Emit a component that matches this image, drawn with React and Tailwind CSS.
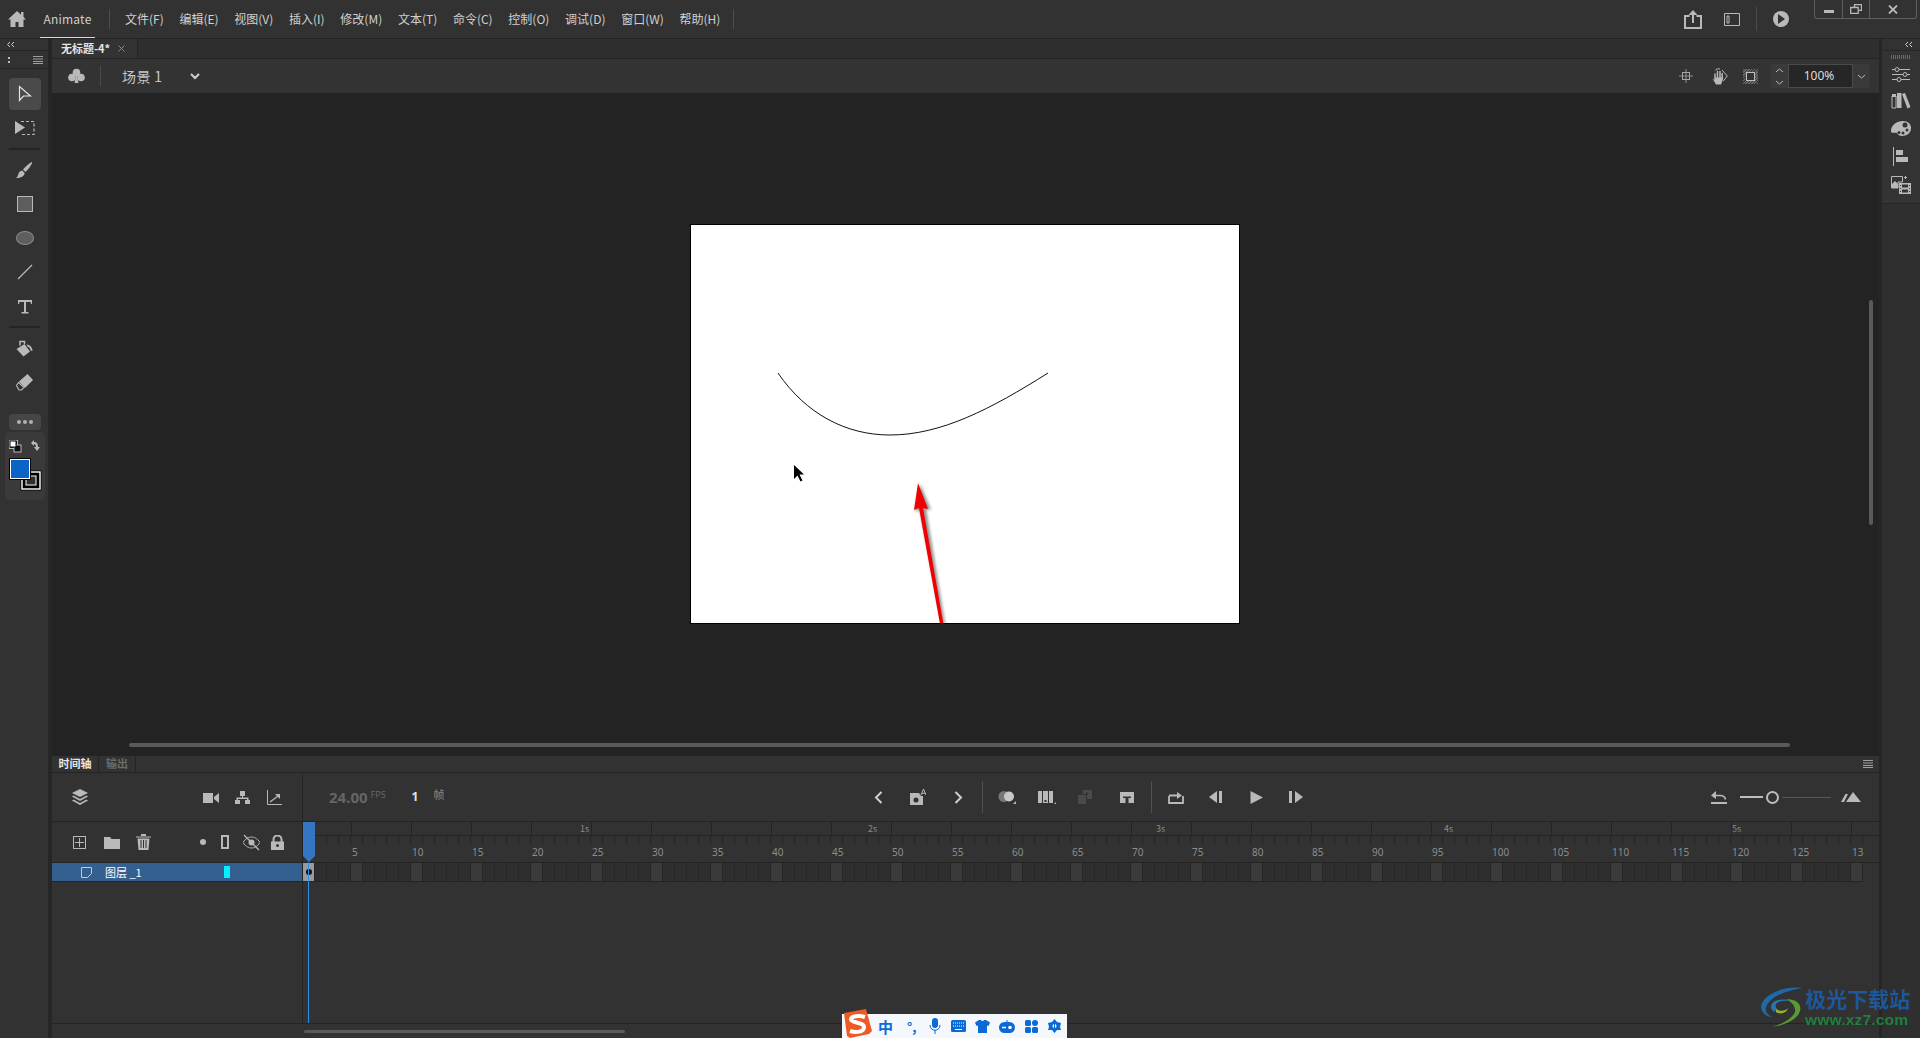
import React from "react";

const menus = ["文件(F)", "编辑(E)", "视图(V)", "插入(I)", "修改(M)", "文本(T)", "命令(C)", "控制(O)", "调试(D)", "窗口(W)", "帮助(H)"];
const frames = Array.from({ length: 130 }, (_, i) => i + 1);
const topCells = Array.from({ length: 26 }, (_, i) => i);
const secLabels = {
  4: ["1s", "pl-[48px]"],
  9: ["2s", "pl-[36px]"],
  14: ["3s", "pl-[24px]"],
  19: ["4s", "pl-[12px]"],
  24: ["5s", "pl-0"],
};

const Svg = ({ w = 20, h = 20, children, className = "" }) => (
  <svg width={w} height={h} viewBox={`0 0 ${w} ${h}`} className={`shrink-0 ${className}`}>
    {children}
  </svg>
);

const G = "#b9b9b9";

const Tool = ({ active, children }) => (
  <div className={`w-8 h-8 flex items-center justify-center rounded ${active ? "bg-[#4a4a4a]" : ""}`}>{children}</div>
);

const Btn = ({ children }) => <div className="w-10 h-8 flex items-center justify-center shrink-0">{children}</div>;

const LeftToolbar = () => (
  <div className="w-[49px] shrink-0 bg-[#323232] flex flex-col border-r border-[#262626]">
    <div className="h-3 flex items-center pl-[6px] border-b border-[#262626]">
      <Svg w={9} h={7}><path d="M4 1 1.500 3.500 4 6M8 1 5.500 3.500 8 6" stroke="#d0d0d0" fill="none" /></Svg>
    </div>
    <div className="h-[18px] flex items-center justify-between pl-2 pr-[5px] border-b border-[#262626]">
      <Svg w={2} h={8}><path d="M0 1h2v2H0zM0 5h2v2H0z" fill="#bbb" /></Svg>
      <Svg w={10} h={8}><path d="M0 .5h10M0 3h10M0 5.500h10M0 7.500h10" stroke="#a0a0a0" /></Svg>
    </div>
    <div className="flex flex-col items-center mt-[9px] gap-[2px] pl-[1px]">
      <Tool active>
        <Svg w={14} h={18}><path d="M1.500 1.500v14l4-4.500h7z" fill="none" stroke="#e4e4e4" strokeWidth="1.200" /></Svg>
      </Tool>
      <Tool>
        <Svg w={20} h={16}>
          <path d="M0 1l10 6.500-10 6.500z" fill={G} />
          <path d="M6 1.500h13v13H6" fill="none" stroke={G} strokeWidth="1.200" strokeDasharray="3 2" />
        </Svg>
      </Tool>
      <div className="w-[31px] h-[2px] bg-[#242424] my-[2px]" />
      <Tool>
        <Svg w={17} h={17}>
          <path d="M16 0c.6 1.500-2.500 6-6.500 10L7 7.500C10 4 14 .5 16 0z" fill={G} />
          <path d="M6.300 8.500 8.700 11C8.500 14 5 16 0 16c2-1 1.800-3.500 3-5.500.6-1 2-1.800 3.300-2z" fill={G} />
        </Svg>
      </Tool>
      <Tool>
        <div className="w-4 h-4 bg-[#5e5e5e] border border-[#b9b9b9]" />
      </Tool>
      <Tool>
        <div className="w-[18px] h-[14px] rounded-[50%] bg-[#5e5e5e] border border-[#8c8c8c]" />
      </Tool>
      <Tool>
        <Svg w={16} h={16}><path d="M1 15 15 1" stroke={G} strokeWidth="1.200" /></Svg>
      </Tool>
      <Tool>
        <Svg w={16} h={15}><path d="M1 1h14v4h-1l-.5-2H9v10h2.500v1.500h-7V13H7V3H2.500L2 5H1z" fill={G} /></Svg>
      </Tool>
      <div className="w-[31px] h-[2px] bg-[#242424] my-[2px]" />
      <Tool>
        <Svg w={17} h={17}>
          <path d="M.5 9 8.500 4l5.500 7.500-6.500 5z" fill={G} />
          <path d="M4 5.500V1.500h4.500V4" fill="none" stroke={G} strokeWidth="1.500" />
          <path d="M10.500 4.500c3.500.2 6 3 6 6.500l-2-.5c0-2-1.500-3.500-3-4z" fill={G} />
        </Svg>
      </Tool>
      <Tool>
        <Svg w={18} h={17}>
          <path d="M3 7.500 11.500 0 17 6 9 14z" fill={G} />
          <path d="M2.500 8.500 8 13.500 5.500 16H3L.5 11.500z" fill="none" stroke={G} strokeWidth="1.100" />
        </Svg>
      </Tool>
      <div className="mt-[14px] w-8 h-4 rounded bg-[#464646] flex items-center justify-center gap-[2px]">
        <div className="w-[4px] h-[4px] rounded-full bg-[#b0b0b0]" />
        <div className="w-[4px] h-[4px] rounded-full bg-[#b0b0b0]" />
        <div className="w-[4px] h-[4px] rounded-full bg-[#b0b0b0]" />
      </div>
      <div className="w-10 h-[68px] rounded bg-[#3a3a3a]">
        <Svg w={40} h={68}>
          <rect x="4.500" y="8.500" width="8" height="8" fill="#111" stroke="#bbb" />
          <rect x="9" y="13" width="7" height="7" fill="#111" stroke="#bbb" />
          <rect x="5" y="9" width="6" height="6" fill="#fff" stroke="#111" />
          <path d="M26 11l3-3v2c3 0 4 2 4 5h2l-3 4-3-4h2c0-2-1-3-2-3v2z" fill={G} />
          <rect x="15.500" y="38.500" width="21" height="20" fill="#000" />
          <rect x="17" y="40" width="18" height="17" fill="none" stroke="#fff" strokeWidth="1.400" />
          <rect x="21" y="44" width="10" height="9" fill="#2e2e2e" stroke="#fff" strokeWidth="1" />
          <rect x="4.500" y="26.500" width="21" height="21" fill="#0a64c8" stroke="#000" />
          <rect x="5.500" y="27.500" width="19" height="19" fill="none" stroke="#fff" />
        </Svg>
      </div>
    </div>
  </div>
);

const RightPanel = () => (
  <div className="w-[38px] shrink-0 bg-[#2f2f2f] flex flex-col">
    <div className="h-3 flex items-center justify-end pr-[7px] border-b border-[#262626] bg-[#323232]">
      <Svg w={9} h={7}><path d="M4 1 1.500 3.500 4 6M8 1 5.500 3.500 8 6" stroke="#d0d0d0" fill="none" /></Svg>
    </div>
    <div className="h-[153px] bg-[#343434] border-b border-[#262626] flex flex-col items-center">
      <div className="h-[4px] w-5 mt-[4px] bg-[repeating-linear-gradient(90deg,#6a6a6a_0,#6a6a6a_1px,transparent_1px,transparent_2px)]" />
      <div className="h-[26px] mt-[2px] flex items-center">
        <Svg w={18} h={15}>
          <path d="M0 2.500h18M0 7.500h18M0 12.500h18" stroke={G} />
          <circle cx="5" cy="2.500" r="2" fill="#343434" stroke={G} />
          <circle cx="13" cy="7.500" r="2" fill="#343434" stroke={G} />
          <circle cx="7" cy="12.500" r="2" fill="#343434" stroke={G} />
        </Svg>
      </div>
      <div className="h-[28px] flex items-center">
        <Svg w={20} h={16}>
          <path d="M1 3h4v12H1z" fill="none" stroke={G} />
          <path d="M1 1h4v3H1zM6 0h4.500v15H6zM11 1l3-1 5.500 14-3 1.500z" fill={G} />
        </Svg>
      </div>
      <div className="h-[27px] flex items-center">
        <Svg w={20} h={15}>
          <path d="M0 10C0 4 6 0 12 0c5 0 8 3 8 7s-3 8-9 8C8 15 7 13 6 12 4 11 0 13 0 10z" fill={G} />
          <circle cx="8" cy="11.500" r="1.500" fill="#343434" /><circle cx="12" cy="12" r="1.500" fill="#343434" />
          <circle cx="16" cy="9" r="1.500" fill="#343434" /><circle cx="14" cy="4" r="2.500" fill="#343434" />
        </Svg>
      </div>
      <div className="h-[28px] flex items-center">
        <Svg w={16} h={19}>
          <path d="M.5 0v19" stroke={G} />
          <path d="M3 3h7v5H3zM3 10h12v5H3z" fill={G} />
        </Svg>
      </div>
      <div className="h-[29px] flex items-center">
        <Svg w={20} h={18}>
          <path d="M.5.500h11V6H7v6H.500z" fill="none" stroke={G} />
          <path d="M1 12V8l3-3 3 3v4z" fill={G} />
          <path d="M8 7h12v11H8z" fill={G} />
          <path d="M11 8.500h6v3h-6zM11 13.500h6v3h-6zM9 9h1v1H9zM9 12h1v1H9zM9 15h1v1H9zM18 9h1v1h-1zM18 12h1v1h-1zM18 15h1v1h-1z" fill="#343434" />
          <path d="M13 1.500h3M14.500 0v3" stroke={G} />
        </Svg>
      </div>
    </div>
  </div>
);

const TitleBar = () => (
  <div className="h-[39px] shrink-0 bg-[#323232] border-b border-[#242424] flex items-center text-[12px] text-[#d0d0d0]">
    <div className="w-[40px] shrink-0 pl-2">
      <Svg w={18} h={16}><path d="M9 0 0 8.500h2.500V16h5v-5h3v5h5V8.500H18L15.500 6V1h-2.500v2.700z" fill={G} /></Svg>
    </div>
    <div className="w-[55px] h-[37px] shrink-0 flex items-center justify-center border-b border-[#d8d8d8] mt-[1px] text-[#cfcfcf] tracking-[0.2px]">Animate</div>
    <div className="w-px h-5 ml-[14px] bg-[#4e4e4e]" />
    <div className="flex items-center gap-[15.700px] ml-[15px]">
      {menus.map((m) => (
        <span key={m} className="whitespace-nowrap">{m}</span>
      ))}
    </div>
    <div className="w-px h-5 ml-[13px] bg-[#4e4e4e]" />
    <div className="ml-auto flex items-center h-full">
      <Svg w={18} h={19}>
        <path d="M5.500 6H1v12h16V6h-4.500" fill="none" stroke={G} strokeWidth="2" />
        <path d="M9 0 4.500 5H8v8h2V5h3.500z" fill={G} />
      </Svg>
      <div className="ml-[22px]">
        <Svg w={16} h={13}>
          <path d="M.5.500h15v12H.5z" fill="none" stroke={G} />
          <path d="M3 3h2v7H3z" fill="none" stroke={G} />
        </Svg>
      </div>
      <div className="w-px h-6 ml-4 bg-[#4a4a4a]" />
      <div className="ml-4 w-4 h-4 rounded-full bg-[#b9b9b9] flex items-center justify-center">
        <Svg w={8} h={10}><path d="M1 0l7 5-7 5z" fill="#323232" /></Svg>
      </div>
      <div className="ml-[25px] self-start w-[103px] h-[19px] flex border border-t-0 border-[#5e5e5e] rounded-b-[3px]">
        <div className="w-[28px] flex items-center justify-center border-r border-[#5e5e5e]">
          <div className="w-[10px] h-[3px] mt-[5px] bg-[#b9b9b9]" />
        </div>
        <div className="w-[27px] flex items-center justify-center border-r border-[#5e5e5e]">
          <Svg w={12} h={10}>
            <path d="M4.500 3V.7h7v5.600H8.500" fill="none" stroke={G} strokeWidth="1.300" />
            <path d="M.7 3.500h7.500v5.800H.7z" fill="none" stroke={G} strokeWidth="1.300" />
          </Svg>
        </div>
        <div className="flex-1 flex items-center justify-center">
          <Svg w={10} h={9}><path d="M1 .5l8 8M9 .5l-8 8" stroke={G} strokeWidth="1.800" /></Svg>
        </div>
      </div>
      <div className="w-[3px]" />
    </div>
  </div>
);

const StageToolbar = () => (
  <div className="h-[34px] shrink-0 bg-[#333333] flex items-center text-[#c8c8c8]">
    <div className="w-12 flex justify-center">
      <Svg w={17} h={17}>
        <circle cx="8.500" cy="4.500" r="3.800" fill={G} /><circle cx="4" cy="9.500" r="3.800" fill={G} /><circle cx="13" cy="9.500" r="3.800" fill={G} />
        <path d="M8 8h1l1.500 7h-4z" fill={G} />
      </Svg>
    </div>
    <div className="w-px h-5 bg-[#4a4a4a]" />
    <span className="ml-[21px] text-[14px] whitespace-nowrap tracking-[0.4px]">场景 1</span>
    <div className="ml-[27px]">
      <Svg w={10} h={7}><path d="M1 1l4 4 4-4" fill="none" stroke="#d0d0d0" strokeWidth="2" /></Svg>
    </div>
    <div className="ml-auto flex items-center h-full pr-[9px]">
      <Svg w={14} h={14}>
        <path d="M7 0v14M0 7h14" stroke="#8e8e8e" />
        <rect x="3.500" y="3.500" width="7" height="7" fill="none" stroke="#a6a6a6" />
      </Svg>
      <div className="ml-[18px]">
        <Svg w={17} h={17}>
          <path d="M4 11V6M6.500 10V3.500M9 10V3.500M11.200 10.500V5.500" stroke={G} strokeWidth="1.500" strokeLinecap="round" />
          <path d="M1.500 10.500 4 12V9.500h7.800V12L10 16.500H5z" fill={G} />
          <path d="M4 2.500C5 1 7 .5 9 1" fill="none" stroke={G} />
          <path d="M11 2l5.300 6-4 5" fill="none" stroke={G} />
        </Svg>
      </div>
      <div className="ml-[15px] w-[15px] h-[15px] bg-[repeating-linear-gradient(135deg,#6b6b6b_0,#6b6b6b_1px,#3a3a3a_1px,#3a3a3a_2px)] flex items-center justify-center">
        <div className="w-[9px] h-[9px] bg-[#333333] border border-[#c0c0c0]" />
      </div>
      <div className="ml-[13px] h-6 flex items-center bg-[#3a3a3a] rounded-[2px]">
        <div className="w-[17px] flex flex-col items-center gap-[7px]">
          <Svg w={9} h={5}><path d="M1 4l3.500-3L8 4" fill="none" stroke={G} /></Svg>
          <Svg w={9} h={5}><path d="M1 1l3.500 3L8 1" fill="none" stroke={G} /></Svg>
        </div>
        <div className="w-[65px] h-6 bg-[#262626] border border-[#4a4a4a] flex items-center justify-center pr-[3px] text-[12px] text-[#dcdcdc] font-['Noto_Sans',sans-serif]">100%</div>
        <div className="w-[17px] flex justify-center">
          <Svg w={9} h={5}><path d="M1 1l3.500 3L8 1" fill="none" stroke={G} /></Svg>
        </div>
      </div>
    </div>
  </div>
);

const Stage = () => (
  <div className="relative flex-1 bg-[#232323] flex items-center justify-center overflow-hidden pr-[1px] pb-[1px]">
    <div className="w-[550px] h-[400px] bg-white border border-black">
      <svg width="548" height="398" viewBox="1 1 548 398" className="block">
        <defs>
          <filter id="sh" x="-50%" y="-10%" width="200%" height="120%"><feGaussianBlur stdDeviation="1.500" /></filter>
        </defs>
        <path d="M88 149C116 190 156 211 200 211 251 211 301 185 358 149" fill="none" stroke="#111" strokeWidth="1" />
        <path d="M104 241v14l3.500-3.500 3 6 2-1-3-6h4.500z" fill="#000" />
        <g filter="url(#sh)" opacity=".6" transform="translate(3 1)">
          <path d="M227 259l-5 27 5-1 22 114h3L233 284l5 1z" fill="#444" />
        </g>
        <path d="M228 259l-4 27 5-2 21 116h3.500L233 284l5 1z" fill="#f00000" />
      </svg>
    </div>
    <div className="absolute left-[77px] right-[89px] top-[650px] h-[4px] bg-[#5a5a5a] rounded-full" />
    <div className="absolute right-[6px] top-[207px] w-[4px] h-[225px] bg-[#5a5a5a] rounded-full" />
  </div>
);

const Timeline = () => (
  <div className="relative h-[282px] shrink-0 bg-[#323232] flex flex-col">
    {/* tabs */}
    <div className="h-[17px] shrink-0 flex items-stretch border-b border-[#242424] text-[11px] leading-none">
      <div className="w-[47px] flex items-center justify-center pb-[1px] font-bold text-[#e6e6e6] border-r border-[#242424]">时间轴</div>
      <div className="w-[37px] flex items-center justify-center pb-[1px] font-bold text-[#6c6c6c] border-r border-[#242424]">输出</div>
      <div className="ml-auto pr-[6px] flex items-center">
        <Svg w={10} h={8}><path d="M0 .5h10M0 3h10M0 5.500h10M0 7.500h10" stroke="#a0a0a0" /></Svg>
      </div>
    </div>
    {/* controls */}
    <div className="h-[49px] shrink-0 flex border-b border-[#242424]">
      <div className="w-[251px] shrink-0 flex items-center border-r border-[#242424] pl-[20px]">
        <Svg w={16} h={16}>
          <path d="M8 0l8 4-8 4-8-4zM1.500 6.500 8 10l6.500-3.500L16 7.500 8 12 0 7.500zM1.500 10.500 8 14l6.500-3.500 1.500 1L8 16l-8-4.500z" fill={G} />
        </Svg>
        <div className="ml-[115px]">
          <Svg w={16} h={11}><path d="M0 1h10v10H0zM11 5l5-4v10l-5-4z" fill={G} /></Svg>
        </div>
        <div className="ml-4">
          <Svg w={15} h={13}><path d="M5 0h5v5H8v1.500h5.500V9H15v4h-5V9h2V8H3v1h2v4H0V9h1.500V6.500H7V5H5z" fill={G} /></Svg>
        </div>
        <div className="ml-[17px]">
          <Svg w={15} h={15}>
            <path d="M.5 0v14.500H15" fill="none" stroke={G} />
            <path d="M3 12l8-6" stroke={G} strokeWidth="1.300" /><path d="M8 4h5v5z" fill={G} />
          </Svg>
        </div>
      </div>
      <div className="flex-1 flex items-center">
        <div className="w-[555px] shrink-0 flex items-center pl-[26px] text-[#666666] font-['Noto_Sans','Noto_Sans_CJK_SC',sans-serif]">
          <span className="text-[15px] font-bold leading-none">24.00</span>
          <span className="text-[9px] ml-[3px] mb-[6px] leading-none">FPS</span>
          <span className="text-[12px] ml-[26px] font-bold text-[#e2e2e2] leading-none">1</span>
          <span className="text-[11px] ml-[15px] mb-[6px] leading-none text-[#8a8a8a]">帧</span>
        </div>
        <Btn><Svg w={9} h={13}><path d="M7.500 1 2 6.500 7.500 12" fill="none" stroke="#cfcfcf" strokeWidth="2" /></Svg></Btn>
        <Btn>
          <Svg w={16} h={17}>
            <path d="M0 4h9l2 3h2v9H0z" fill={G} /><circle cx="6" cy="11" r="2.500" fill="#323232" />
            <path d="M11 6l2.500-6L16 6M12 4.300h3" fill="none" stroke={G} strokeWidth="1" />
          </Svg>
        </Btn>
        <Btn><Svg w={9} h={13}><path d="M1.500 1 7 6.500 1.500 12" fill="none" stroke="#cfcfcf" strokeWidth="2" /></Svg></Btn>
        <div className="w-px h-8 ml-[4px] mr-[4px] bg-[#505050] shrink-0" />
        <Btn>
          <Svg w={18} h={14}>
            <circle cx="6" cy="6.500" r="5.500" fill="#777" /><circle cx="11" cy="6.500" r="5" fill="#c8c8c8" />
            <path d="M18 14h-3l3-3z" fill={G} />
          </Svg>
        </Btn>
        <Btn>
          <Svg w={18} h={14}>
            <path d="M0 1h4v12H0zM5 1h5v12H5zM11 1h4v12h-4z" fill={G} /><path d="M6.500 10h2v2h-2z" fill="#323232" />
            <path d="M18 14h-2l2-2z" fill={G} />
          </Svg>
        </Btn>
        <Btn>
          <Svg w={18} h={14}>
            <path d="M5 0h9v9H9V4H5zM0 5h8v9H0z" fill="#4a4a4a" />
            <path d="M8 2l3 1.500L8 5z" fill="#323232" />
          </Svg>
        </Btn>
        <Btn>
          <Svg w={14} h={11}><path d="M0 0h14v11H8.500V6H11V4.500H3V6h2.500v5H0z" fill={G} /></Svg>
        </Btn>
        <div className="w-px h-8 ml-[4px] mr-[4px] bg-[#505050] shrink-0" />
        <Btn>
          <Svg w={16} h={13}>
            <path d="M1 5v7h14V5" fill="none" stroke={G} strokeWidth="1.800" />
            <path d="M1 5.500h8V8l5-3.500L9 1v2.500H1z" fill={G} />
          </Svg>
        </Btn>
        <Btn><Svg w={14} h={12}><path d="M8 0v12L0 6zM10 0h3v12h-3z" fill={G} /></Svg></Btn>
        <Btn><Svg w={13} h={13}><path d="M.5 0 13 6.500.5 13z" fill={G} /></Svg></Btn>
        <Btn><Svg w={14} h={12}><path d="M6 0v12l8-6zM0 0h3v12H0z" fill={G} /></Svg></Btn>
        <div className="ml-auto flex items-center pr-[18px]">
          <Svg w={16} h={13}>
            <path d="M0 12h16" stroke={G} strokeWidth="2" />
            <path d="M4 4.500h5c3 0 5 1.500 5.500 4" fill="none" stroke={G} strokeWidth="1.600" /><path d="M5 0v8L0 4.500z" fill={G} />
          </Svg>
          <div className="ml-[13px] w-[23px] h-[2px] bg-[#bdbdbd]" />
          <div className="w-[13px] h-[13px] rounded-full border-2 border-[#bdbdbd] ml-[3px]" />
          <div className="ml-[3px] w-[49px] h-[1px] bg-[#565656]" />
          <div className="ml-[10px]">
            <Svg w={20} h={10}><path d="M0 10 4.500 2 7 2 3 10zM5 10 12 0l8 10z" fill={G} /></Svg>
          </div>
        </div>
      </div>
    </div>
    {/* ruler */}
    <div className="h-[41px] shrink-0 flex border-b border-[#242424]">
      <div className="w-[251px] shrink-0 flex items-center border-r border-[#242424] pl-[21px]">
        <div className="w-[13px] h-[13px] border border-[#b9b9b9] flex items-center justify-center">
          <Svg w={9} h={9}><path d="M4.500 0v9M0 4.500h9" stroke={G} /></Svg>
        </div>
        <div className="ml-[18px]">
          <Svg w={16} h={13}><path d="M0 1h6l1.500 2H16v10H0z" fill={G} /></Svg>
        </div>
        <div className="ml-[16px]">
          <Svg w={15} h={16}>
            <path d="M0 2.500h15v1H0zM5 0h5v2H5zM1.500 4.500h12L12.500 16h-10z" fill={G} />
            <path d="M5 6v8M7.500 6v8M10 6v8" stroke="#323232" />
          </Svg>
        </div>
        <div className="ml-[49px] w-[6px] h-[6px] rounded-full bg-[#b9b9b9]" />
        <div className="ml-[15px] w-2 h-[14px] border-2 border-[#b9b9b9]" />
        <div className="ml-[14px]">
          <Svg w={17} h={17}>
            <path d="M0 8.500C3 4 6 3 8.500 3s5.500 1 8.500 5.500C14 13 11 14 8.500 14S3 13 0 8.500z" fill="none" stroke={G} />
            <circle cx="8.500" cy="8.500" r="3" fill={G} /><path d="M1 1l15 15" stroke={G} strokeWidth="1.300" />
          </Svg>
        </div>
        <div className="ml-[11px]">
          <Svg w={13} h={15}>
            <path d="M2.500 7V4.500a4 4 0 0 1 8 0V7" fill="none" stroke={G} strokeWidth="2" />
            <path d="M0 6.500h13V15H0z" fill={G} /><circle cx="6.500" cy="10.500" r="1.500" fill="#323232" />
          </Svg>
        </div>
      </div>
      <div className="flex-1 flex flex-col min-w-0">
        <div className="h-[14px] flex border-b border-[#242424]">
          {topCells.map((i) => (
            <div
              key={i}
              className={`${i === 0 ? "w-[48px]" : "w-[60px] border-l border-[#242424]"} shrink-0 text-[9px] leading-[14px] text-[#8a8a8a] whitespace-nowrap ${secLabels[i] ? secLabels[i][1] : ""}`}
            >
              {secLabels[i] ? secLabels[i][0] : ""}
            </div>
          ))}
          <div className="flex-1 border-l border-[#242424]" />
        </div>
        <div className="h-[8px] flex">
          {frames.map((f) => (
            <div key={f} className="w-3 shrink-0 border-r border-[#242424]" />
          ))}
        </div>
        <div className="flex-1 flex text-[10px] leading-[17px] text-[#8d8d8d] font-['Noto_Sans',sans-serif]">
          {frames.map((f) => (
            <div key={f} className="w-3 shrink-0 whitespace-nowrap pl-[1px] overflow-visible">
              {f === 130 ? "13" : f % 5 === 0 ? f : ""}
            </div>
          ))}
        </div>
      </div>
    </div>
    {/* layer row */}
    <div className="h-[19px] shrink-0 flex">
      <div className="w-[250px] shrink-0 bg-[#34608f] border-b border-[#242424] flex items-center pl-[29px] text-[11px] text-white">
        <Svg w={11} h={11}><path d="M.5.500h10v6l-4 4H.500z" fill="none" stroke="#c8c8c8" /></Svg>
        <span className="ml-[13px] w-[37px] whitespace-nowrap">图层 _1</span>
        <div className="ml-[82px] w-[6px] h-3 bg-[#00f0ff]" />
      </div>
      <div className="w-px bg-[#242424]" />
      <div className="flex h-[19px] border-b border-[#242424]">
        {frames.map((f) => (
          <div
            key={f}
            className={`w-3 shrink-0 border-r border-[#262626] ${f === 1 ? "bg-[#9a9a9a] flex items-center justify-center" : f % 5 === 0 ? "bg-[#3a3a3a]" : "bg-[#2e2e2e]"}`}
          >
            {f === 1 && <div className="w-[6px] h-[6px] rounded-full bg-[#111]" />}
          </div>
        ))}
      </div>
    </div>
    {/* empty area */}
    <div className="flex-1 flex border-b border-[#242424]">
      <div className="w-[251px] border-r border-[#242424]" />
    </div>
    <div className="h-[14px] shrink-0 flex items-center pl-[252px]">
      <div className="w-[321px] h-[3px] rounded-full bg-[#5a5a5a]" />
    </div>
    {/* playhead */}
    <div className="absolute left-[251px] top-[66px] w-[12px] h-[40px] bg-[#3476c4] [clip-path:polygon(0_0,100%_0,100%_85%,50%_100%,0_85%)]" />
    <div className="absolute left-[256px] top-[106px] bottom-[15px] w-[1px] bg-[#2f8fe8]" />
  </div>
);

const Sogou = () => (
  <div className="absolute left-[842px] bottom-0 w-[225px] h-[24px] bg-[#f4f7fc] flex items-center pl-[36px] text-[#0a6ad6]">
    <svg width="32" height="30" viewBox="0 0 32 30" className="absolute -left-[1px] -top-[5px]">
      <path d="M3 4 25 0l6 22-3 3-19 4-3-2z" fill="#ee5a24" />
      <path d="M24 8c-6-2-14-1-14 2.500S23 13 23 18s-8 6-14 4" fill="none" stroke="#fff" strokeWidth="4" />
    </svg>
    <span className="w-4 text-[15px] font-bold leading-none">中</span>
    <span className="ml-[13px] w-[14px] text-[13px] font-bold leading-none">°,</span>
    <div className="ml-[8px]">
      <Svg w={12} h={16}>
        <rect x="3" y="0" width="6" height="10" rx="3" fill="#0a6ad6" />
        <path d="M1 7c0 7 10 7 10 0M6 12v4" fill="none" stroke="#0a6ad6" />
      </Svg>
    </div>
    <div className="ml-[10px]">
      <Svg w={15} h={12}>
        <rect width="15" height="12" rx="1.500" fill="#0a6ad6" />
        <path d="M2 3h11M2 6h11" stroke="#fff" strokeDasharray="1 1" /><path d="M4 9.500h7" stroke="#fff" />
      </Svg>
    </div>
    <div className="ml-[9px]">
      <Svg w={15} h={13}><path d="M4 0h2c.5 1.500 2.500 1.500 3 0h2l4 2.500L13.500 6 12 5.500V13H3V5.500L1.500 6 0 2.500z" fill="#0a6ad6" /></Svg>
    </div>
    <div className="ml-[9px]">
      <Svg w={16} h={13}>
        <path d="M8 0v2" stroke="#0a6ad6" />
        <rect y="2" width="16" height="11" rx="5.500" fill="#0a6ad6" />
        <circle cx="11" cy="7.500" r="1.800" fill="#fff" /><path d="M3 7.500h4" stroke="#fff" strokeWidth="1.500" />
      </Svg>
    </div>
    <div className="ml-[10px]">
      <Svg w={13} h={13}>
        <rect width="6" height="6" rx="1.500" fill="#0a6ad6" /><rect x="7" width="6" height="6" rx="3" fill="#0a6ad6" />
        <rect y="7" width="6" height="6" rx="1.500" fill="#0a6ad6" /><rect x="7" y="7" width="6" height="6" rx="1.500" fill="#0a6ad6" />
      </Svg>
    </div>
    <div className="ml-[10px]">
      <Svg w={13} h={14}>
        <path d="M6.500 0 9 3l4 1-1 4 1 3-4 0-2.500 3L4 11l-4 0 1-3-1-4 4-1z" fill="#0a6ad6" />
        <circle cx="6.500" cy="7" r="2" fill="#fff" /><path d="M6.500 4v6" stroke="#0a6ad6" />
      </Svg>
    </div>
  </div>
);

const Watermark = () => (
  <div className="absolute left-[1760px] top-[985px] flex items-start opacity-90 blur-[0.4px]">
    <svg width="44" height="44" viewBox="0 0 44 44" className="shrink-0">
      <path d="M42 3C26 1 8 7 2 18c-3 6 2 14 10 14-5-2-8-7-5-12C12 11 26 6 42 3z" fill="#1d6fb5" />
      <path d="M14 27c-4-3-4-8 1-11 5-2 12-2 14 0-5-1-11 0-13 3-1 2 0 4 1 5z" fill="#2b7cc0" />
      <path d="M26 14c10 0 16 5 14 12-2 8-14 14-28 16 10-3 20-8 23-15 1-5-3-10-9-13z" fill="#5aa832" />
      <path d="M16 24c4 3 10 2 12-1-1 5-8 7-12 4z" fill="#9cc42e" />
    </svg>
    <div className="ml-[1px] flex flex-col">
      <span className="text-[21px] font-bold leading-[26px] text-[#1a5ea8] whitespace-nowrap">极光下载站</span>
      <span className="text-[15.500px] font-bold leading-[18px] tracking-[0.2px] text-[#1c8a3f] font-['Liberation_Sans',sans-serif] whitespace-nowrap">www.xz7.com</span>
    </div>
  </div>
);

export default function App() {
  return (
    <div className="relative w-[1920px] h-[1038px] overflow-hidden flex flex-col bg-[#262626] font-['Noto_Sans_CJK_SC','Noto_Sans',sans-serif]">
      <TitleBar />
      <div className="flex-1 flex min-h-0">
        <LeftToolbar />
        <div className="w-[3px] shrink-0 bg-[#262626]" />
        <div className="w-[1827px] shrink-0 flex flex-col min-w-0">
          <div className="h-5 shrink-0 bg-[#2e2e2e] flex border-b border-[#242424]">
            <div className="w-[86px] bg-[#333333] flex items-center pl-[9px] border-r border-[#242424]">
              <span className="text-[11px] font-bold text-[#e4e4e4] whitespace-nowrap">无标题-4*</span>
              <span className="ml-[8px]">
                <Svg w={7} h={7}><path d="M.5.500l6 6M6.500.500l-6 6" stroke="#8a8a8a" /></Svg>
              </span>
            </div>
          </div>
          <StageToolbar />
          <Stage />
          <Timeline />
        </div>
        <div className="w-[3px] shrink-0 bg-[#262626]" />
        <RightPanel />
      </div>
      <Sogou />
      <Watermark />
    </div>
  );
}
